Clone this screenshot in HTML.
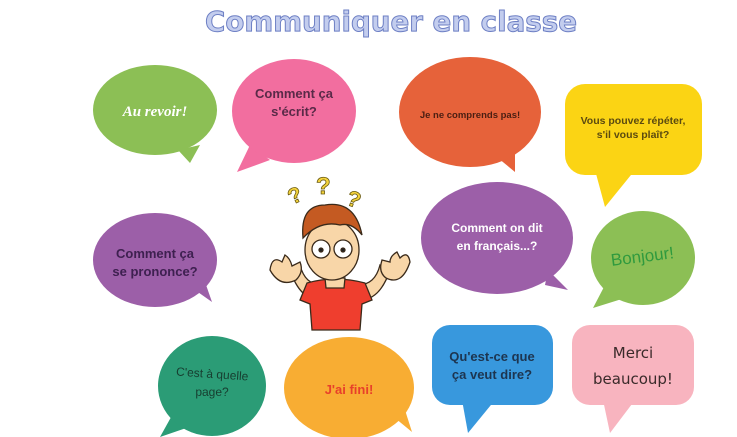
<!DOCTYPE html>
<html><head><meta charset="utf-8"><style>
html,body{margin:0;padding:0;background:#fff;width:737px;height:437px;overflow:hidden}
svg{display:block}
text{font-family:"Liberation Sans",sans-serif;font-weight:bold}
</style></head><body>
<svg width="737" height="437" viewBox="0 0 737 437">
<text x="391" y="31" text-anchor="middle" font-size="28" textLength="372" lengthAdjust="spacingAndGlyphs" fill="#c3cdee" stroke="#6d7fc4" stroke-width="1" style="font-family:'DejaVu Sans',sans-serif;font-weight:bold">Communiquer en classe</text>

<path d="M190 163 L178 150 L200 145 Z" fill="#8cbf55"/>
<ellipse cx="155" cy="110" rx="62" ry="45" fill="#8cbf55"/>
<text x="155" y="116" text-anchor="middle" font-size="15" fill="#fff" font-style="italic" style="font-family:'Liberation Serif',serif">Au revoir!</text>

<path d="M237 172 L250 145 L270 160 Z" fill="#f26e9f"/>
<ellipse cx="294" cy="111" rx="62" ry="52" fill="#f26e9f"/>
<text x="294" y="98" text-anchor="middle" font-size="13" fill="#5a2a48">Comment ça</text>
<text x="294" y="116" text-anchor="middle" font-size="13" fill="#5a2a48">s'écrit?</text>

<path d="M515 172 L498 158 L515 152 Z" fill="#e6623a"/>
<ellipse cx="470" cy="112" rx="71" ry="55" fill="#e6623a"/>
<text x="470" y="118" text-anchor="middle" font-size="9.5" fill="#4a1e12">Je ne comprends pas!</text>

<path d="M595 170 L605 207 L635 170 Z" fill="#fbd414"/>
<rect x="565" y="84" width="137" height="91" rx="20" fill="#fbd414"/>
<text x="633" y="124" text-anchor="middle" font-size="10.5" fill="#5b4a10">Vous pouvez répéter,</text>
<text x="633" y="138" text-anchor="middle" font-size="10.5" fill="#5b4a10">s'il vous plaît?</text>

<path d="M212 302 L195 290 L205 282 Z" fill="#9c5fa8"/>
<ellipse cx="155" cy="260" rx="62" ry="47" fill="#9c5fa8"/>
<text x="155" y="258" text-anchor="middle" font-size="13" fill="#3e2050">Comment ça</text>
<text x="155" y="276" text-anchor="middle" font-size="13" fill="#3e2050">se prononce?</text>

<path d="M568 290 L548 270 L545 285 Z" fill="#9c5fa8"/>
<ellipse cx="497" cy="238" rx="76" ry="56" fill="#9c5fa8"/>
<text x="497" y="232" text-anchor="middle" font-size="12" fill="#fff">Comment on dit</text>
<text x="497" y="250" text-anchor="middle" font-size="12" fill="#fff">en français...?</text>

<path d="M593 308 L605 285 L625 298 Z" fill="#8cbf55"/>
<ellipse cx="643" cy="258" rx="52" ry="47" fill="#8cbf55"/>
<text x="643" y="262" text-anchor="middle" font-size="17" fill="#2f9a3e" style="font-weight:normal" transform="rotate(-7 643 262)">Bonjour!</text>

<path d="M160 437 L175 410 L195 425 Z" fill="#2b9c76"/>
<ellipse cx="212" cy="386" rx="54" ry="50" fill="#2b9c76"/>
<text x="212" y="378" text-anchor="middle" font-size="12" fill="#173e30" style="font-weight:normal" transform="rotate(4 212 378)">C'est à quelle</text>
<text x="212" y="396" text-anchor="middle" font-size="12" fill="#173e30" style="font-weight:normal">page?</text>

<path d="M412 432 L395 418 L405 410 Z" fill="#f8ad33"/>
<ellipse cx="349" cy="388" rx="65" ry="51" fill="#f8ad33"/>
<text x="349" y="394" text-anchor="middle" font-size="13" fill="#e8402a">J'ai fini!</text>

<path d="M462 400 L468 433 L495 400 Z" fill="#3898dd"/>
<rect x="432" y="325" width="121" height="80" rx="18" fill="#3898dd"/>
<text x="492" y="361" text-anchor="middle" font-size="13" fill="#1d3550">Qu'est-ce que</text>
<text x="492" y="379" text-anchor="middle" font-size="13" fill="#1d3550">ça veut dire?</text>

<path d="M603 400 L610 433 L635 400 Z" fill="#f8b4bf"/>
<rect x="572" y="325" width="122" height="80" rx="18" fill="#f8b4bf"/>
<text x="633" y="358" text-anchor="middle" font-size="15" fill="#3a2a2a" style="font-weight:normal;font-family:'DejaVu Sans',sans-serif">Merci</text>
<text x="633" y="384" text-anchor="middle" font-size="15" fill="#3a2a2a" style="font-weight:normal;font-family:'DejaVu Sans',sans-serif">beaucoup!</text>

<g stroke="#3a2a1a" stroke-width="1.3">
<text x="292" y="205" font-size="22" fill="#f3d23c" stroke="#6a5a10" stroke-width="0.8" transform="rotate(-25 292 205)">?</text>
<text x="316" y="194" font-size="24" fill="#f3d23c" stroke="#6a5a10" stroke-width="0.8">?</text>
<text x="345" y="204" font-size="22" fill="#f3d23c" stroke="#6a5a10" stroke-width="0.8" transform="rotate(20 345 204)">?</text>
<path d="M290 270 Q300 300 320 300 L322 285 Q305 285 300 265 Z" fill="#f8d6a8"/>
<path d="M390 270 Q380 300 360 300 L358 285 Q375 285 380 265 Z" fill="#f8d6a8"/>
<path d="M270 270 Q272 255 282 262 L285 255 Q290 258 292 266 L300 262 Q304 272 296 280 Q280 288 270 270 Z" fill="#f8d6a8"/>
<path d="M410 262 Q408 250 400 258 L397 252 Q390 256 390 262 L382 260 Q378 272 386 278 Q402 286 410 262 Z" fill="#f8d6a8"/>
<path d="M307 283 Q335 275 365 283 L372 300 L362 304 L360 330 L312 330 L310 304 L300 300 Z" fill="#ef3e2e"/>
<path d="M325 278 L345 278 L344 288 L326 288 Z" fill="#f8d6a8"/>
<ellipse cx="332" cy="250" rx="27" ry="30" fill="#f8d6a8"/>
<path d="M303 238 Q300 205 325 205 Q355 200 362 235 Q352 222 340 225 Q320 220 303 238 Z" fill="#c45a22"/>
<circle cx="321" cy="249" r="9" fill="#fff"/>
<circle cx="343" cy="249" r="9" fill="#fff"/>
<circle cx="321" cy="250" r="2" fill="#222"/>
<circle cx="343" cy="250" r="2" fill="#222"/>
</g>
</svg>
</body></html>
